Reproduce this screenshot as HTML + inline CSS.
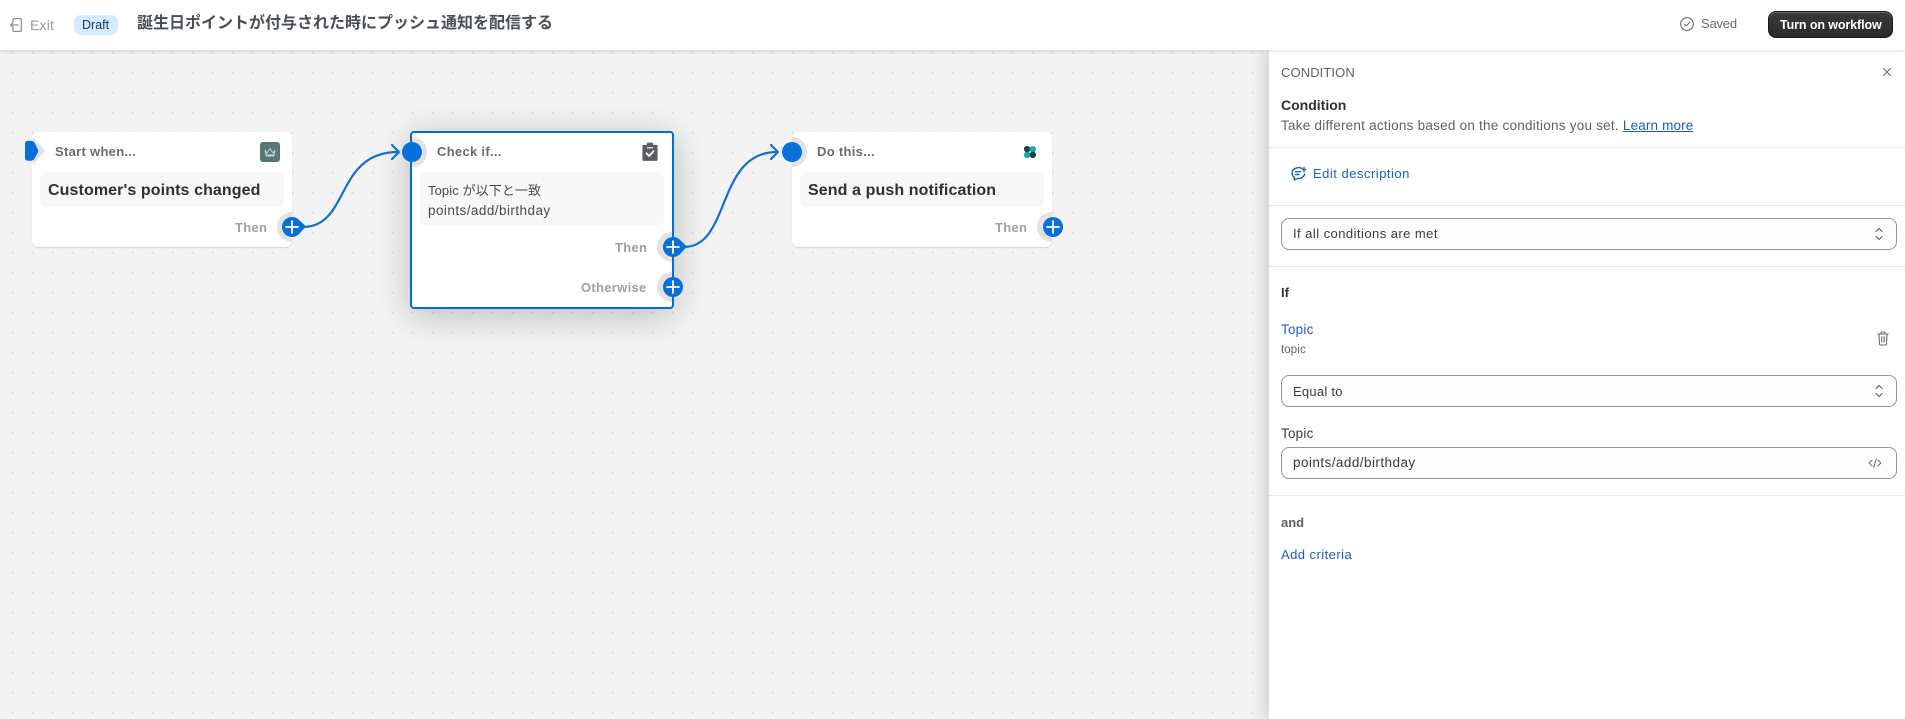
<!DOCTYPE html>
<html lang="ja">
<head>
<meta charset="utf-8">
<title>Workflow</title>
<style>
html,body{margin:0;padding:0;width:1905px;height:719px;overflow:hidden;background:#f3f3f3;font-family:"Liberation Sans","Noto Sans CJK JP",sans-serif;color:#303030}
#canvas{position:absolute;left:0;top:0;width:1905px;height:719px;background-color:#f3f3f3;background-image:radial-gradient(circle at 12.7px 12.7px,#dcdcdc 0.9px,transparent 1.2px);background-size:20px 20px}
.abs,.t{position:absolute}
.t{white-space:nowrap}
#top{position:absolute;left:0;top:0;width:1905px;height:50px;background:#fff;box-shadow:0 1px 4px rgba(0,0,0,.14);z-index:5}
.node{position:absolute;background:#fff;border-radius:6px;box-sizing:border-box;box-shadow:0 1px 1px rgba(0,0,0,.12)}
.box{position:absolute;background:#f7f7f7;border-radius:6px}
.head{font-size:13px;font-weight:700;color:#6b6b6b;line-height:16px;letter-spacing:.3px}
.title{font-size:16px;font-weight:700;color:#303030;line-height:20px}
.then{font-size:13px;font-weight:700;color:#9f9f9f;line-height:16px;letter-spacing:.3px}
#panel{position:absolute;left:1269px;top:50px;width:636px;height:669px;background:#fff;box-shadow:-4px 0 14px rgba(0,0,0,.16);z-index:3}
.hr{position:absolute;left:1269px;width:636px;height:1px;background:#e8e8e8;z-index:4}
.sel{position:absolute;left:1281px;width:616px;height:32px;box-sizing:border-box;border:1px solid #949494;border-radius:8px;background:#fdfdfd;z-index:4}
.p{z-index:4;font-size:13px;line-height:16px;color:#303030}
svg{position:absolute;display:block;overflow:visible}
</style>
</head>
<body>
<div id="canvas"></div>

<!-- top bar -->
<div id="top"></div>
<svg style="left:9px;top:17px;z-index:6" width="14" height="16" viewBox="0 0 14 16" fill="none" stroke="#8f8f8f" stroke-width="1.3" stroke-linecap="round" stroke-linejoin="round"><path d="M4 4.500V2.800Q4 1.500 5.300 1.500H11Q12.300 1.500 12.300 2.800V13Q12.300 14.400 11 14.400H5.300Q4 14.400 4 13V11.500"/><path d="M9 8H1.500M4 5.600L1.500 8L4 10.400"/></svg>
<div class="t" style="left:30px;top:17px;font-size:14px;line-height:16px;color:#9a9a9a;z-index:6;letter-spacing:.2px">Exit</div>
<div class="abs" style="left:74px;top:15px;width:44px;height:20px;background:#d5ebff;border-radius:7px;z-index:6"></div>
<div class="t" style="left:82px;top:17px;font-size:12.5px;line-height:16px;color:#103a5e;z-index:6">Draft</div>
<div class="t" style="left:137px;top:13px;font-size:16px;line-height:22px;font-weight:700;color:#4a4f55;z-index:6">誕生日ポイントが付与された時にプッシュ通知を配信する</div>
<svg style="left:1680px;top:17px;z-index:6" width="14" height="14" viewBox="0 0 14 14" fill="none" stroke="#6b6b6b" stroke-width="1.1" stroke-linecap="round" stroke-linejoin="round"><circle cx="7" cy="7" r="6.3"/><path d="M4.3 7.200L6.200 9.100L9.800 5"/></svg>
<div class="t" style="left:1701px;top:16px;font-size:13px;line-height:16px;color:#6b6b6b;z-index:6;letter-spacing:-.2px">Saved</div>
<div class="abs" style="left:1768px;top:11px;width:125px;height:27px;box-sizing:border-box;background:linear-gradient(#3a3a3a,#2b2b2b);border:1px solid #1a1a1a;border-radius:8px;z-index:6;box-shadow:inset 0 1px 0 rgba(255,255,255,.25)"></div>
<div class="t" style="left:1780px;top:17px;font-size:12.5px;line-height:16px;font-weight:700;color:#fff;z-index:7;letter-spacing:-.1px">Turn on workflow</div>

<!-- node 1 -->
<div class="node" style="left:32px;top:132px;width:260px;height:115px"></div>
<svg style="left:22px;top:136px;z-index:1" width="24" height="32" viewBox="0 0 24 32"><path d="M11 1L23 15L11 29Z" fill="#e3e3e3"/><path d="M3 7.500Q3 4.700 6 4.700H9Q11 4.700 12.500 6.700L15.700 13Q16.700 15 15.700 17L12.500 22.700Q11 24.700 9 24.700H6Q3 24.700 3 22Z" fill="#0a6fd8"/></svg>
<div class="t head" style="left:55px;top:144px">Start when...</div>
<div class="abs" style="left:260px;top:142px;width:20px;height:20px;background:#5a7675;border-radius:3px"></div>
<svg style="left:264px;top:147px" width="12" height="10" viewBox="0 0 12 10" fill="none" stroke="#cfdcdb" stroke-width=".9"><path d="M1 3L3 6L6 1.500L9 6L11 3L10 8H2Z"/><path d="M2 9H10"/></svg>
<div class="box" style="left:40px;top:172px;width:244px;height:35px"></div>
<div class="t title" style="left:48px;top:181px;letter-spacing:.1px">Customer's points changed</div>
<div class="t then" style="left:235px;top:220px">Then</div>

<!-- node 2 -->
<div class="node" style="left:410px;top:131px;width:264px;height:178px;border:2px solid #0a6cc8;border-radius:4px;box-shadow:0 6px 36px rgba(0,0,0,.24)"></div>
<div class="t head" style="left:437px;top:144px">Check if...</div>
<svg style="left:642px;top:142px" width="16" height="20" viewBox="0 0 18 22"><path d="M1.500 3H5.500V1.800Q5.500 .5 7 .5H11Q12.500 .5 12.500 1.800V3H16.500Q17.500 3 17.500 4V20Q17.500 21 16.500 21H1.500Q.5 21 .5 20V4Q.5 3 1.500 3Z" fill="#5b5b60"/><path d="M6 6.300H12" stroke="#fff" stroke-width="1.300" stroke-linecap="round"/><path d="M5 12.500L8 15.500L13 10" stroke="#fff" stroke-width="2" fill="none" stroke-linecap="round" stroke-linejoin="round"/></svg>
<div class="box" style="left:420px;top:172px;width:244px;height:54px"></div>
<div class="t" style="left:428px;top:181px;font-size:13px;line-height:20px;color:#4a4a4a;letter-spacing:.1px">Topic が以下と一致<br><span style="font-size:13.5px;letter-spacing:.45px">points/add/birthday</span></div>
<div class="t then" style="left:615px;top:240px">Then</div>
<div class="t then" style="left:581px;top:280px">Otherwise</div>

<!-- node 3 -->
<div class="node" style="left:792px;top:132px;width:260px;height:115px"></div>
<div class="t head" style="left:817px;top:144px">Do this...</div>
<svg style="left:1024px;top:146px" width="12" height="12" viewBox="0 0 12 12"><circle cx="3.200" cy="3.200" r="3.200" fill="#10434a"/><circle cx="8.800" cy="3.200" r="3.200" fill="#1da7a7"/><circle cx="3.200" cy="8.800" r="3.200" fill="#1da7a7"/><circle cx="8.800" cy="8.800" r="3.200" fill="#10434a"/></svg>
<div class="box" style="left:800px;top:172px;width:244px;height:35px"></div>
<div class="t title" style="left:808px;top:181px;letter-spacing:.1px">Send a push notification</div>
<div class="t then" style="left:995px;top:220px">Then</div>

<!-- connectors and handles -->
<svg style="left:0;top:0;z-index:2" width="1268" height="719" viewBox="0 0 1268 719" fill="none">
  <g fill="#e1e2e4">
    <path d="M292 212A15 15 0 0 0 292 242Z"/>
    <path d="M672 232A15 15 0 0 0 672 262Z"/>
    <path d="M672 272A15 15 0 0 0 672 302Z"/>
    <path d="M1052 212A15 15 0 0 0 1052 242Z"/>
    <path d="M412 137A15 15 0 0 1 412 167Z"/>
    <path d="M792 137A15 15 0 0 1 792 167Z"/>
  </g>
  <g stroke="#1170cf" stroke-width="2.200">
    <path d="M303 227C350 227 335 152 398 152"/>
    <path d="M392 145L399 152L392 159" stroke-linejoin="round" stroke-linecap="round"/>
    <path d="M684 247C731 247 716 152 777 152"/>
    <path d="M771 145L778 152L771 159" stroke-linejoin="round" stroke-linecap="round"/>
  </g>
  <g fill="#0a6fd8">
    <circle cx="412" cy="152" r="10"/>
    <circle cx="792" cy="152" r="10"/>
    <path d="M292 217A10 10 0 0 1 299 219.900L306 226.500L299 234.100A10 10 0 1 1 292 217Z"/>
    <path d="M673 237A10 10 0 0 1 680 239.900L687 246.500L680 254.100A10 10 0 1 1 673 237Z"/>
    <circle cx="673" cy="287" r="10"/>
    <circle cx="1053" cy="227" r="10"/>
  </g>
  <g stroke="#fff" stroke-width="1.800" stroke-linecap="round">
    <path d="M292 221V233M286 227H298"/>
    <path d="M673 241V253M667 247H679"/>
    <path d="M673 281V293M667 287H679"/>
    <path d="M1053 221V233M1047 227H1059"/>
  </g>
</svg>

<!-- panel -->
<div id="panel"></div>
<div class="t p" style="left:1281px;top:65px;color:#616161;letter-spacing:.1px">CONDITION</div>
<svg style="left:1882px;top:67px;z-index:4" width="10" height="10" viewBox="0 0 10 10" stroke="#6b6b6b" stroke-width="1.100" stroke-linecap="round"><path d="M1.500 1.500L8.500 8.500M8.500 1.500L1.500 8.500"/></svg>
<div class="t p" style="left:1281px;top:97px;font-size:14px;font-weight:700;color:#303030">Condition</div>
<div class="t p" style="left:1281px;top:118px;font-size:13.5px;color:#616161;letter-spacing:.24px">Take different actions based on the conditions you set. <span style="color:#1a5fbf;text-decoration:underline;letter-spacing:.15px">Learn more</span></div>
<div class="hr" style="top:147px"></div>
<svg style="left:1291px;top:166px;z-index:4" width="16" height="16" viewBox="0 0 16 16" fill="none" stroke="#1a5fbf" stroke-width="1.400" stroke-linecap="round" stroke-linejoin="round"><path d="M11 2.300Q8.500 1.200 6 1.800C2.500 2.500 .8 5 1.100 7.500C1.300 9.500 2.300 10.800 3.500 11.500L3.200 14L6.500 12.500C10 12.800 13 11 13.700 8"/><path d="M4.500 5.700H9.500M4.500 8.500H8"/><path d="M13 1.500V2.500M13 4.500V5.500M11.500 3.500H12.200M13.800 3.500H14.600"/></svg>
<div class="t p" style="left:1313px;top:166px;color:#1a5fbf;letter-spacing:.5px">Edit description</div>
<div class="hr" style="top:205px"></div>
<div class="sel" style="top:218px"></div>
<div class="t p" style="left:1293px;top:226px;letter-spacing:.45px;color:#3b3b3b">If all conditions are met</div>
<svg style="left:1874px;top:227px;z-index:5" width="10" height="14" viewBox="0 0 10 14" fill="none" stroke="#5f5f5f" stroke-width="1.100" stroke-linecap="round" stroke-linejoin="round"><path d="M2 4.500L5 1.500L8 4.500M2 9.500L5 12.500L8 9.500"/></svg>
<div class="hr" style="top:266px"></div>
<div class="t p" style="left:1281px;top:285px;font-weight:700;color:#303030">If</div>
<div class="t p" style="left:1281px;top:322px;font-size:13.5px;letter-spacing:.2px;color:#1a5fbf">Topic</div>
<div class="t p" style="left:1281px;top:342px;font-size:11.500px;color:#616161;letter-spacing:.1px">topic</div>
<svg style="left:1877px;top:331px;z-index:4" width="12" height="15" viewBox="0 0 12 15" fill="none" stroke="#6b6b6b" stroke-width="1.100" stroke-linecap="round" stroke-linejoin="round"><path d="M.8 3H11.200M4 3V1.900Q4 1 5 1H7Q8 1 8 1.900V3M2 3L2.500 13Q2.600 14 3.600 14H8.400Q9.400 14 9.500 13L10 3"/><path d="M4.800 5.800V11M7.200 5.800V11"/></svg>
<div class="sel" style="top:375px"></div>
<div class="t p" style="left:1293px;top:384px;color:#3b3b3b;letter-spacing:.25px">Equal to</div>
<svg style="left:1874px;top:384px;z-index:5" width="10" height="14" viewBox="0 0 10 14" fill="none" stroke="#5f5f5f" stroke-width="1.100" stroke-linecap="round" stroke-linejoin="round"><path d="M2 4.500L5 1.500L8 4.500M2 9.500L5 12.500L8 9.500"/></svg>
<div class="t p" style="left:1281px;top:426px;font-size:13.5px;letter-spacing:.2px;color:#3b3b3b">Topic</div>
<div class="sel" style="top:447px"></div>
<div class="t p" style="left:1293px;top:455px;font-size:13.5px;color:#3b3b3b;letter-spacing:.45px">points/add/birthday</div>
<svg style="left:1868px;top:458px;z-index:5" width="14" height="10" viewBox="0 0 16 12" fill="none" stroke="#6b6b6b" stroke-width="1.200" stroke-linecap="round" stroke-linejoin="round"><path d="M4.500 2.500L1 6L4.500 9.500M11.500 2.500L15 6L11.500 9.500M9.500 1L6.500 11"/></svg>
<div class="hr" style="top:495px"></div>
<div class="t p" style="left:1281px;top:515px;font-weight:700;color:#616161">and</div>
<div class="t p" style="left:1281px;top:547px;color:#1a5fbf;letter-spacing:.45px">Add criteria</div>
</body>
</html>
